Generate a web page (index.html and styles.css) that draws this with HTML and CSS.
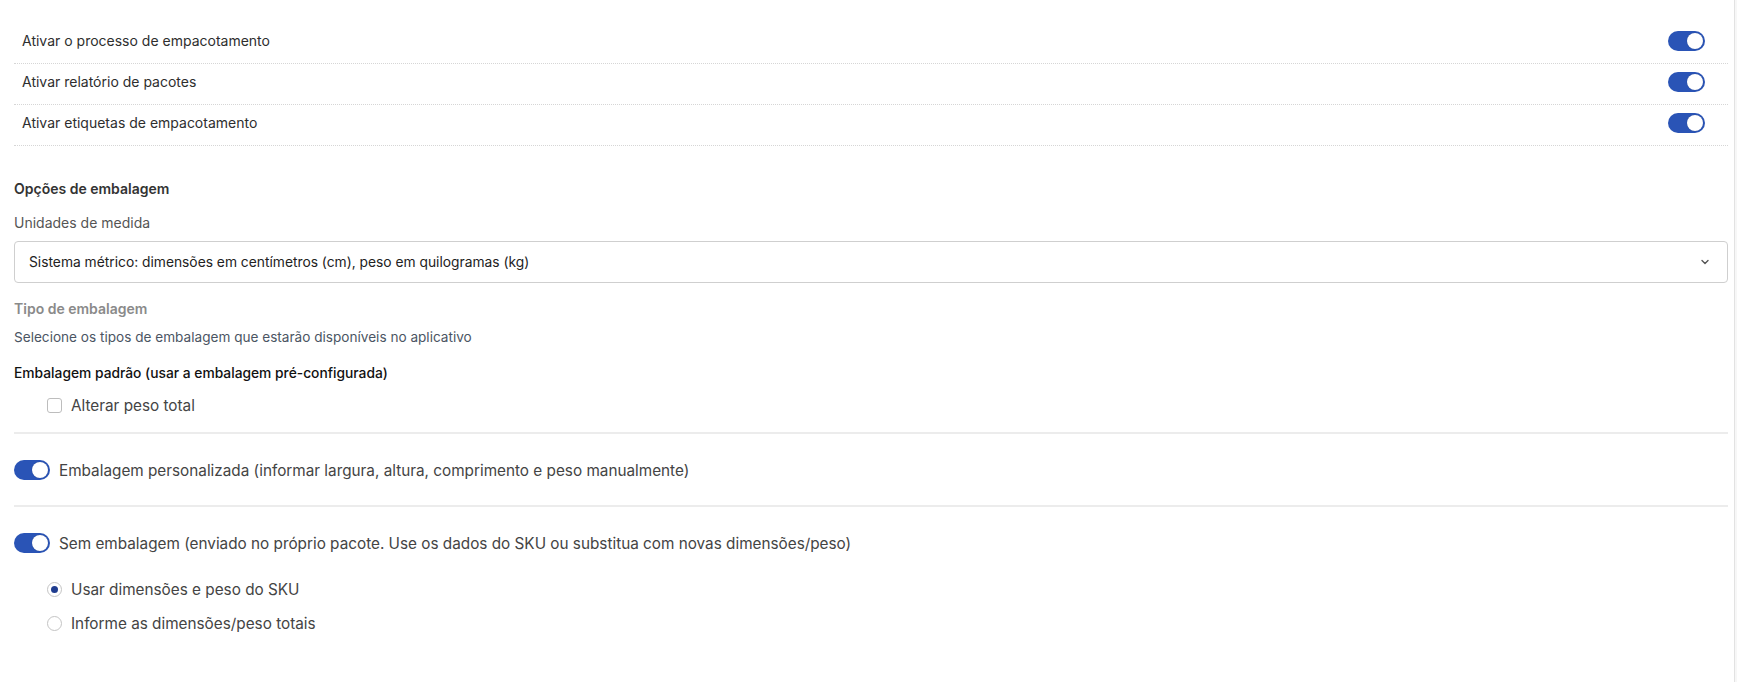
FILE: index.html
```html
<!DOCTYPE html>
<html lang="pt-BR">
<head>
  <meta charset="UTF-8">
  <title>Empacotamento</title>
  <link rel="stylesheet" href="styles.css">
</head>
<body>

  <div class="page">

    <div class="switch-list">
      <div class="switch-row">
        <span>Ativar o processo de empacotamento</span>
        <span class="toggle on"></span>
      </div>
      <div class="switch-row">
        <span>Ativar relatório de pacotes</span>
        <span class="toggle on"></span>
      </div>
      <div class="switch-row">
        <span>Ativar etiquetas de empacotamento</span>
        <span class="toggle on"></span>
      </div>
    </div>

    <h3 class="section-title">Opções de embalagem</h3>

    <div class="field-label">Unidades de medida</div>
    <div class="select">
      <span>Sistema métrico: dimensões em centímetros (cm), peso em quilogramas (kg)</span>
      <svg width="10" height="10" viewBox="0 0 10 10"><path d="M2 3.5 L5 6.5 L8 3.5" fill="none" stroke="#555" stroke-width="1.4" stroke-linecap="round" stroke-linejoin="round"/></svg>
    </div>

    <div class="field-title">Tipo de embalagem</div>
    <div class="field-help">Selecione os tipos de embalagem que estarão disponíveis no aplicativo</div>

    <div class="pack-title">Embalagem padrão (usar a embalagem pré-configurada)</div>
    <label class="option">
      <span class="checkbox"></span>
      Alterar peso total
    </label>

    <hr class="divider">

    <div class="pack-toggle">
      <span class="toggle on"></span>
      Embalagem personalizada (informar largura, altura, comprimento e peso manualmente)
    </div>

    <hr class="divider">

    <div class="pack-toggle">
      <span class="toggle on"></span>
      Sem embalagem (enviado no próprio pacote. Use os dados do SKU ou substitua com novas dimensões/peso)
    </div>

    <div class="radio-group">
      <label class="option">
        <span class="radio checked"></span>
        Usar dimensões e peso do SKU
      </label>
      <label class="option">
        <span class="radio"></span>
        Informe as dimensões/peso totais
      </label>
    </div>

  </div>

</body>
</html>
```

FILE: styles.css
```css
:root {
  --blue: #2a54b6;
  --text: #333;
  --muted: #555;
  --line: #ececec;
}

body {
  margin: 0;
  background-color: #f7f7f7;
  font-family: Inter, "Liberation Sans", sans-serif;
  color: var(--text);
}

.page {
  width: 1735px;
  min-height: 682px;
  box-sizing: border-box;
  padding: 23px 6px 0 14px;
  background-color: #fff;
  border-right: 1px solid #e2e2e2;
}

/* top switches */
.switch-row {
  display: flex;
  align-items: center;
  justify-content: space-between;
  height: 35px;
  padding: 0 23px 5px 8px;
  border-bottom: 1px dotted #d6d6d6;
  font-size: 14px;
  color: #2e2e2e;
}

.toggle {
  position: relative;
  display: inline-block;
  flex: 0 0 auto;
  width: 37px;
  height: 20px;
  border-radius: 10px;
  background-color: #c9c9c9;
}

.toggle::after {
  content: "";
  position: absolute;
  top: 2px;
  left: 2px;
  width: 16px;
  height: 16px;
  border-radius: 50%;
  background-color: #fff;
  box-shadow: 0 0 1px rgba(0,0,0,0.3);
}

.toggle.on {
  background-color: var(--blue);
}

.toggle.on::after {
  left: 19px;
}

/* options */
.section-title {
  margin: 34px 0 0;
  font-size: 14px;
  font-weight: 600;
  line-height: 17px;
}

.field-label {
  margin-top: 17px;
  font-size: 14px;
  line-height: 17px;
  color: var(--muted);
}

.select {
  display: flex;
  align-items: center;
  justify-content: space-between;
  height: 42px;
  box-sizing: border-box;
  margin-top: 10px;
  padding: 0 17px 0 14px;
  border: 1px solid #cfcfcf;
  border-radius: 4px;
  font-size: 13.8px;
  color: #222;
}

.field-title {
  margin-top: 17px;
  font-size: 14px;
  font-weight: 600;
  line-height: 17px;
  color: #8a8a8a;
}

.field-help {
  margin-top: 12px;
  font-size: 13.6px;
  line-height: 17px;
  color: #4b5563;
}

.pack-title {
  margin-top: 19px;
  font-size: 13.8px;
  font-weight: 500;
  line-height: 17px;
  color: #111;
}

.option {
  display: flex;
  align-items: center;
  gap: 9px;
  height: 20px;
  padding-left: 33px;
  font-size: 15.3px;
  color: #444;
}

.pack-title + .option {
  margin-top: 13px;
}

.checkbox {
  width: 13px;
  height: 13px;
  border: 1px solid #bdbdbd;
  border-radius: 3px;
}

.radio {
  width: 13px;
  height: 13px;
  border: 1px solid #c4c4c4;
  border-radius: 50%;
  box-sizing: content-box;
  display: flex;
  align-items: center;
  justify-content: center;
}

.radio.checked::after {
  content: "";
  width: 7px;
  height: 7px;
  border-radius: 50%;
  background-color: #1f3c8f;
}

.divider {
  height: 2px;
  margin: 17px 0 0;
  border: 0;
  background-color: var(--line);
}

.pack-toggle {
  display: flex;
  align-items: center;
  gap: 9px;
  height: 20px;
  margin: 26px 0 25px;
  font-size: 15.3px;
  color: #444;
}

.pack-toggle .toggle {
  width: 36px;
}

.pack-toggle .toggle.on::after {
  left: 18px;
}

.pack-toggle + .divider {
  margin-top: 0;
}

.radio-group {
  display: flex;
  flex-direction: column;
  gap: 14px;
  margin-top: 26px;
}
```
